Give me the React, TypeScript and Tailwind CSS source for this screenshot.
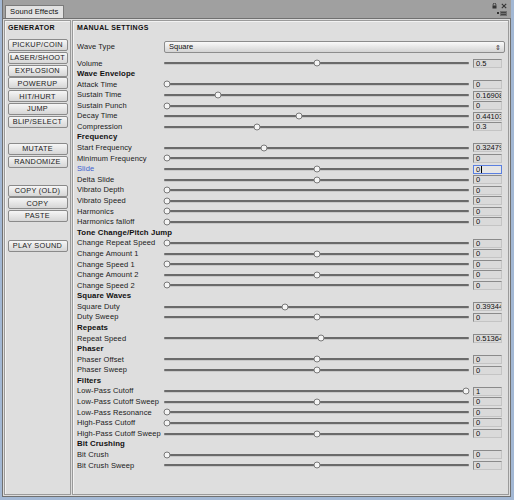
import React from "react";

type Row =
  | { kind: "h"; label: string }
  | { kind: "s"; label: string; pos: number; value: string; focus?: boolean };

const h = (label: string): Row => ({ kind: "h", label });
const s = (label: string, pos: number, value = "0", focus = false): Row => ({
  kind: "s",
  label,
  pos,
  value,
  focus,
});

const rows: Row[] = [
  s("Volume", 0.5, "0.5"),
  h("Wave Envelope"),
  s("Attack Time", 0),
  s("Sustain Time", 0.169, "0.16908"),
  s("Sustain Punch", 0),
  s("Decay Time", 0.441, "0.44103"),
  s("Compression", 0.3, "0.3"),
  h("Frequency"),
  s("Start Frequency", 0.325, "0.32479"),
  s("Minimum Frequency", 0),
  s("Slide", 0.5, "0", true),
  s("Delta Slide", 0.5),
  s("Vibrato Depth", 0),
  s("Vibrato Speed", 0),
  s("Harmonics", 0),
  s("Harmonics falloff", 0),
  h("Tone Change/Pitch Jump"),
  s("Change Repeat Speed", 0),
  s("Change Amount 1", 0.5),
  s("Change Speed 1", 0),
  s("Change Amount 2", 0.5),
  s("Change Speed 2", 0),
  h("Square Waves"),
  s("Square Duty", 0.393, "0.39344"),
  s("Duty Sweep", 0.5),
  h("Repeats"),
  s("Repeat Speed", 0.514, "0.51364"),
  h("Phaser"),
  s("Phaser Offset", 0.5),
  s("Phaser Sweep", 0.5),
  h("Filters"),
  s("Low-Pass Cutoff", 1, "1"),
  s("Low-Pass Cutoff Sweep", 0.5),
  s("Low-Pass Resonance", 0),
  s("High-Pass Cutoff", 0),
  s("High-Pass Cutoff Sweep", 0.5),
  h("Bit Crushing"),
  s("Bit Crush", 0),
  s("Bit Crush Sweep", 0.5),
];

function Btn({ label }: { label: string }) {
  return (
    <div className="h-[12px] w-[60px] mx-auto flex items-center justify-center rounded-[2px] border border-[#8a8a8a] bg-gradient-to-b from-[#f6f6f6] to-[#d6d6d6] text-[7.3px] leading-none tracking-[0.3px] text-[#222]">
      {label}
    </div>
  );
}

function Slider({ pos }: { pos: number }) {
  return (
    <div className="relative h-full w-[305px] flex items-center">
      <div className="w-full h-[2px] rounded-full bg-[#6a6a6a] shadow-[0_1px_0_#c8c8c8]" />
      <div
        className="absolute top-1/2 h-[7px] w-[7px] -translate-x-1/2 -translate-y-1/2 rounded-full border border-[#7a7a7a] bg-[#f4f4f4]"
        style={{ left: `calc(3px + ${pos} * (100% - 6px))` }}
      />
    </div>
  );
}

function Field({ value, focus }: { value: string; focus?: boolean }) {
  return (
    <div
      className={
        "ml-[4px] h-[9px] w-[29px] overflow-hidden whitespace-nowrap pl-[2px] text-[7.5px] leading-[8px] text-[#111] " +
        (focus
          ? "border border-[#5a7fe0] bg-[#e6e6e6]"
          : "border border-t-[#8a8a8a] border-l-[#8a8a8a] border-r-[#c4c4c4] border-b-[#c4c4c4] bg-[#dadada]")
      }
    >
      {value}
      {focus && <span className="inline-block w-[1px] h-[7px] bg-black align-middle ml-[0.5px]" />}
    </div>
  );
}

export default function App() {
  return (
    <div
      className="w-[514px] h-[500px] flex flex-col bg-[#9c9c9c] border-l-[2px] border-r-[3px] border-b-[3px] border-[#a3b8d4] text-[#111]"
      style={{ fontFamily: '"Liberation Sans", Arial, sans-serif' }}
    >
      {/* top strip */}
      <div className="h-[18px] shrink-0 flex items-end relative bg-[#a0a0a0] border-l border-[#6f6f6f]">
        <div className="ml-[2px] h-[13px] w-[59px] flex items-center pl-[4px] bg-[#e2e2e2] border border-b-0 border-[#7a7a7a] rounded-t-[1px] text-[7.6px] leading-none tracking-[0.1px] text-[#111]">
          Sound Effects
        </div>
        <div className="ml-auto mr-[4px] self-start mt-[3px] flex flex-col items-end gap-[2px]">
          <div className="flex items-center gap-[4px]">
            <svg width="5" height="6" viewBox="0 0 5 6">
              <rect x="0.5" y="2.5" width="4" height="3" fill="#333" />
              <path d="M1.2 2.5 V1.4 A1.3 1.3 0 0 1 3.8 1.4 V2.5" fill="none" stroke="#333" strokeWidth="0.9" />
            </svg>
            <svg width="6" height="6" viewBox="0 0 6 6">
              <path d="M0.8 0.8 L5.2 5.2 M5.2 0.8 L0.8 5.2" stroke="#333" strokeWidth="1.1" />
            </svg>
          </div>
          <svg width="10" height="5" viewBox="0 0 10 5">
            <rect x="0" y="1" width="2" height="2" fill="#333" />
            <rect x="3" y="0" width="7" height="5" fill="#6f6f6f" />
            <rect x="4" y="1" width="5" height="1" fill="#444" />
            <rect x="4" y="3" width="5" height="1" fill="#444" />
          </svg>
        </div>
      </div>

      {/* main area */}
      <div className="flex-1 flex gap-[1px] p-[1px] bg-[#dcdcdc] border border-[#707070]">
        {/* left panel */}
        <div className="w-[67px] shrink-0 border border-[#9a9a9a] shadow-[inset_1px_1px_0_#f2f2f2] bg-[#dedede] flex flex-col">
          <div className="h-[14px] flex items-center pl-[3px] text-[7px] font-bold tracking-[0.3px]">
            GENERATOR
          </div>
          <div className="mt-[4px] flex flex-col gap-[0.8px]">
            <Btn label="PICKUP/COIN" />
            <Btn label="LASER/SHOOT" />
            <Btn label="EXPLOSION" />
            <Btn label="POWERUP" />
            <Btn label="HIT/HURT" />
            <Btn label="JUMP" />
            <Btn label="BLIP/SELECT" />
          </div>
          <div className="mt-[15px] flex flex-col gap-[1px]">
            <Btn label="MUTATE" />
            <Btn label="RANDOMIZE" />
          </div>
          <div className="mt-[17px] flex flex-col gap-[0.6px]">
            <Btn label="COPY (OLD)" />
            <Btn label="COPY" />
            <Btn label="PASTE" />
          </div>
          <div className="mt-[18px]">
            <Btn label="PLAY SOUND" />
          </div>
        </div>

        {/* right panel */}
        <div className="flex-1 border border-[#9a9a9a] shadow-[inset_1px_1px_0_#f2f2f2] bg-[#dedede] flex flex-col pl-[4px] pr-[3px]">
          <div className="h-[14px] flex items-center text-[7px] font-bold tracking-[0.3px]">
            MANUAL SETTINGS
          </div>
          <div className="mt-[6px] h-[12px] flex items-center">
            <div className="w-[87px] text-[7.5px] leading-none tracking-[0.1px] text-[#1a1a1a]">Wave Type</div>
            <div className="flex-1 h-[12px] flex items-center rounded-[2px] border border-[#8c8c8c] bg-gradient-to-b from-[#fafafa] to-[#d4d4d4] pl-[4px] pr-[3px] text-[7.5px] leading-none">
              Square
              <span className="ml-auto text-[7px] leading-none text-[#333]">⇕</span>
            </div>
          </div>
          <div className="mt-[5px] flex flex-col">
            {rows.map((r, i) =>
              r.kind === "h" ? (
                <div
                  key={i}
                  className="h-[10.58px] flex items-center text-[7.8px] font-bold leading-none tracking-[0.1px]"
                >
                  {r.label}
                </div>
              ) : (
                <div key={i} className="h-[10.58px] flex items-center">
                  <div
                    className={
                      "w-[87px] shrink-0 text-[7.5px] leading-none tracking-[0.1px] whitespace-nowrap " +
                      (r.focus ? "text-[#3b5fd0]" : "text-[#1a1a1a]")
                    }
                  >
                    {r.label}
                  </div>
                  <Slider pos={r.pos} />
                  <Field value={r.value} focus={r.focus} />
                </div>
              )
            )}
          </div>
        </div>
      </div>
    </div>
  );
}
